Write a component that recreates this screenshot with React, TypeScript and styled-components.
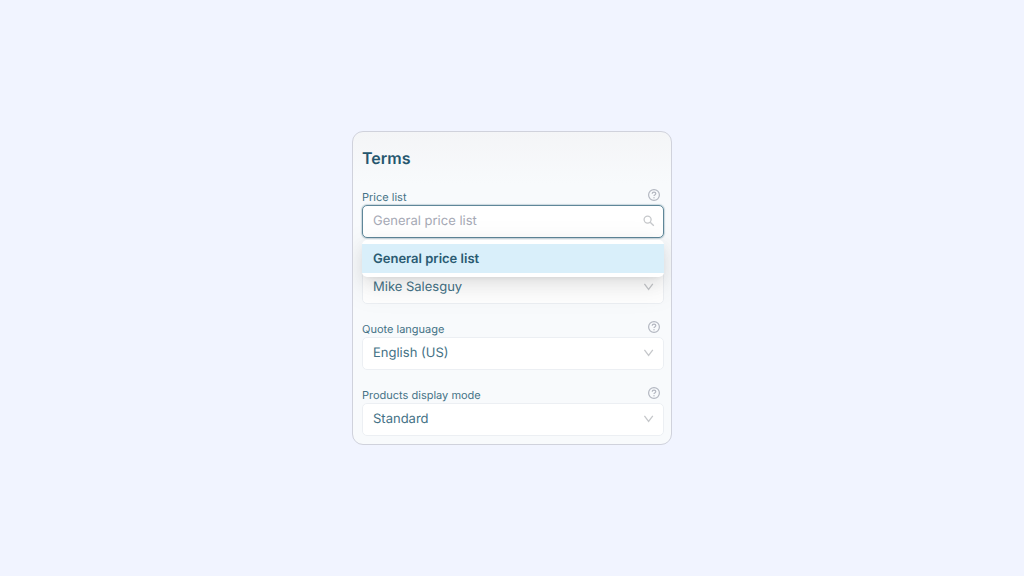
import React from "react";
import styled, { createGlobalStyle, css } from "styled-components";

const GlobalStyle = createGlobalStyle`
  *, *::before, *::after { box-sizing: border-box; }
  body {
    margin: 0;
    background: #f1f4ff;
    font-family: Inter, "Liberation Sans", sans-serif;
    text-rendering: geometricPrecision;
    color: #447286;
  }
`;

const Page = styled.main`
  min-height: 100vh;
  padding: 16px;
  display: flex;
  align-items: center;
  justify-content: center;
`;

const Card = styled.form`
  width: 100%;
  max-width: 320px;
  padding: 14px 7px 8px 9px;
  border: 1px solid #d0d2dc;
  border-radius: 11px;
  background: linear-gradient(#f4f5f7, #f8fafc 52px);
  overflow: hidden;
`;

const Title = styled.h2`
  margin: 0 0 17px;
  font-size: 16px;
  line-height: 24px;
  font-weight: 600;
  color: #25566e;
`;

const Fields = styled.div`
  display: flex;
  flex-direction: column;
  gap: 15px;
`;

const Field = styled.div`
  position: relative;
`;

const FieldHead = styled.div`
  height: 18px;
  padding-right: 3px;
  display: flex;
  justify-content: space-between;
`;

const Label = styled.label`
  padding-top: 2px;
  font-size: 11px;
  line-height: 16px;
`;

const HelpButton = styled.button`
  width: 14px;
  height: 16px;
  padding: 0;
  border: 0;
  background: none;
  display: flex;
  align-items: center;
  justify-content: center;
  color: #b3b7c1;
`;

const Control = styled.div`
  display: grid;
  align-items: center;

  > * {
    grid-area: 1 / 1;
  }
  > svg {
    justify-self: end;
    margin: 0 9px 2px 0;
    color: #c6c8cb;
    pointer-events: none;
  }
`;

const controlStyle = css`
  width: 100%;
  height: 33px;
  padding: 0 32px 2px 10px;
  border: 1px solid #eceff3;
  border-radius: 5px;
  background: #fff;
  font: 400 13px/20px Inter, "Liberation Sans", sans-serif;
  text-rendering: geometricPrecision;
  color: #447286;
  outline: none;
  appearance: none;
`;

const Select = styled.select`
  ${controlStyle}
`;

const SearchInput = styled.input`
  ${controlStyle}
  border-color: #5f8799;
  box-shadow: 0 0 1px 1px rgba(95, 135, 153, 0.3);

  &::placeholder {
    color: #a6a9b5;
    opacity: 1;
  }
`;

const Menu = styled.div`
  position: absolute;
  z-index: 1;
  top: 100%;
  left: 0;
  right: 0;
  margin-top: 2px;
  padding: 4px 0;
  border-radius: 5px;
  background: #fff;
  box-shadow:
    0 6px 16px rgba(0, 0, 0, 0.08),
    0 3px 6px -4px rgba(0, 0, 0, 0.12),
    0 9px 28px 8px rgba(0, 0, 0, 0.05);
`;

const Option = styled.button`
  display: block;
  width: 100%;
  height: 29px;
  padding: 0 11px;
  border: 0;
  background: #d9effa;
  font: 600 13px/20px Inter, "Liberation Sans", sans-serif;
  text-rendering: geometricPrecision;
  color: #2a5b72;
  text-align: left;
`;

const HelpIcon = () => (
  <svg width="12" height="12" viewBox="0 0 12 12" fill="none" stroke="currentColor" aria-hidden="true">
    <circle cx="6" cy="6" r="5.4" strokeWidth="1.2" />
    <path d="M4.2 4.7c0-1 .8-1.6 1.8-1.6s1.8.6 1.8 1.5c0 .7-.5 1-1 1.3-.5.3-.8.6-.8 1.2" strokeWidth="1.2" />
    <circle cx="6" cy="8.7" r="0.7" fill="currentColor" stroke="none" />
  </svg>
);

const SearchIcon = () => (
  <svg width="12" height="12" viewBox="0 0 12 12" fill="none" stroke="currentColor" strokeWidth="1.3" aria-hidden="true">
    <circle cx="4.6" cy="4.6" r="3.5" />
    <path d="M7.2 7.2l3.6 3.6" />
  </svg>
);

const ChevronIcon = () => (
  <svg width="12" height="12" viewBox="0 0 12 12" fill="none" stroke="currentColor" strokeWidth="1.3" aria-hidden="true">
    <path d="M1.4 2.9L5.6 8.4l4.2-5.5" />
  </svg>
);

const Help = ({ topic }: { topic: string }) => (
  <HelpButton type="button" aria-label={`Help: ${topic}`}>
    <HelpIcon />
  </HelpButton>
);

type SelectFieldProps = { id: string; label: string; value: string };

const SelectField = ({ id, label, value }: SelectFieldProps) => (
  <Field>
    <FieldHead>
      <Label htmlFor={id}>{label}</Label>
      <Help topic={label} />
    </FieldHead>
    <Control>
      <Select id={id} defaultValue={value}>
        <option>{value}</option>
      </Select>
      <ChevronIcon />
    </Control>
  </Field>
);

export default function App() {
  return (
    <>
      <GlobalStyle />
      <Page>
        <Card>
          <Title>Terms</Title>
          <Fields>
            <Field>
              <FieldHead>
                <Label htmlFor="price-list">Price list</Label>
                <Help topic="Price list" />
              </FieldHead>
              <Control>
                <SearchInput
                  id="price-list"
                  role="combobox"
                  aria-expanded="true"
                  aria-controls="price-list-menu"
                  placeholder="General price list"
                />
                <SearchIcon />
              </Control>
              <Menu id="price-list-menu" role="listbox">
                <Option type="button" role="option" aria-selected="true">
                  General price list
                </Option>
              </Menu>
            </Field>
            <Field>
              <FieldHead />
              <Control>
                <Select aria-label="Salesperson" defaultValue="Mike Salesguy">
                  <option>Mike Salesguy</option>
                </Select>
                <ChevronIcon />
              </Control>
            </Field>
            <SelectField id="quote-language" label="Quote language" value="English (US)" />
            <SelectField id="display-mode" label="Products display mode" value="Standard" />
          </Fields>
        </Card>
      </Page>
    </>
  );
}
